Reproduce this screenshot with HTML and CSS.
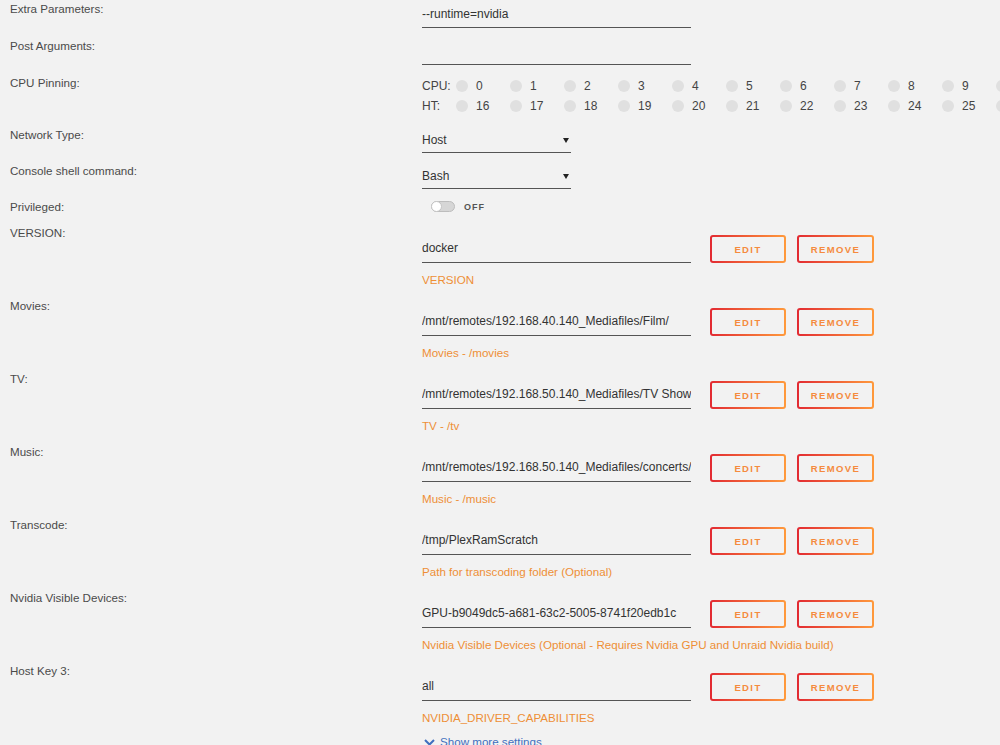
FILE: index.html
```html
<!DOCTYPE html>
<html>
<head>
<meta charset="utf-8">
<link rel="stylesheet" href="styles.css">
</head>
<body>
<div class="form">
  <div class="row row-text">
    <div class="label">Extra Parameters:</div>
    <div class="field"><div class="input">--runtime=nvidia</div></div>
  </div>
  <div class="row row-text">
    <div class="label">Post Arguments:</div>
    <div class="field"><div class="input"></div></div>
  </div>
  <div class="row row-cpu">
    <div class="label">CPU Pinning:</div>
    <div class="field">
      <div class="cpu-line">
        <span class="cpu-tag">CPU:</span>
        <span class="cell"><i></i>0</span><span class="cell"><i></i>1</span><span class="cell"><i></i>2</span><span class="cell"><i></i>3</span><span class="cell"><i></i>4</span><span class="cell"><i></i>5</span><span class="cell"><i></i>6</span><span class="cell"><i></i>7</span><span class="cell"><i></i>8</span><span class="cell"><i></i>9</span><span class="cell"><i></i></span>
      </div>
      <div class="cpu-line">
        <span class="cpu-tag">HT:</span>
        <span class="cell"><i></i>16</span><span class="cell"><i></i>17</span><span class="cell"><i></i>18</span><span class="cell"><i></i>19</span><span class="cell"><i></i>20</span><span class="cell"><i></i>21</span><span class="cell"><i></i>22</span><span class="cell"><i></i>23</span><span class="cell"><i></i>24</span><span class="cell"><i></i>25</span><span class="cell"><i></i></span>
      </div>
    </div>
  </div>
  <div class="row row-select">
    <div class="label">Network Type:</div>
    <div class="field"><div class="select"><span>Host</span><svg class="caret" width="6" height="5" viewBox="0 0 6 5"><path d="M0 0H6L3 5Z" fill="#222"/></svg></div></div>
  </div>
  <div class="row row-select">
    <div class="label">Console shell command:</div>
    <div class="field"><div class="select"><span>Bash</span><svg class="caret" width="6" height="5" viewBox="0 0 6 5"><path d="M0 0H6L3 5Z" fill="#222"/></svg></div></div>
  </div>
  <div class="row row-switch">
    <div class="label">Privileged:</div>
    <div class="field switch-field"><span class="switch"><span class="knob"></span></span><span class="off">OFF</span></div>
  </div>

  <div class="row row-config">
    <div class="label">VERSION:</div>
    <div class="field">
      <div class="config-line"><div class="input cfg">docker</div><div class="btn edit">EDIT</div><div class="btn remove">REMOVE</div></div>
      <div class="desc">VERSION</div>
    </div>
  </div>
  <div class="row row-config">
    <div class="label">Movies:</div>
    <div class="field">
      <div class="config-line"><div class="input cfg">/mnt/remotes/192.168.40.140_Mediafiles/Film/</div><div class="btn edit">EDIT</div><div class="btn remove">REMOVE</div></div>
      <div class="desc">Movies - /movies</div>
    </div>
  </div>
  <div class="row row-config">
    <div class="label">TV:</div>
    <div class="field">
      <div class="config-line"><div class="input cfg">/mnt/remotes/192.168.50.140_Mediafiles/TV Shows/</div><div class="btn edit">EDIT</div><div class="btn remove">REMOVE</div></div>
      <div class="desc">TV - /tv</div>
    </div>
  </div>
  <div class="row row-config">
    <div class="label">Music:</div>
    <div class="field">
      <div class="config-line"><div class="input cfg">/mnt/remotes/192.168.50.140_Mediafiles/concerts/</div><div class="btn edit">EDIT</div><div class="btn remove">REMOVE</div></div>
      <div class="desc">Music - /music</div>
    </div>
  </div>
  <div class="row row-config">
    <div class="label">Transcode:</div>
    <div class="field">
      <div class="config-line"><div class="input cfg">/tmp/PlexRamScratch</div><div class="btn edit">EDIT</div><div class="btn remove">REMOVE</div></div>
      <div class="desc">Path for transcoding folder (Optional)</div>
    </div>
  </div>
  <div class="row row-config">
    <div class="label">Nvidia Visible Devices:</div>
    <div class="field">
      <div class="config-line"><div class="input cfg">GPU-b9049dc5-a681-63c2-5005-8741f20edb1c</div><div class="btn edit">EDIT</div><div class="btn remove">REMOVE</div></div>
      <div class="desc">Nvidia Visible Devices (Optional - Requires Nvidia GPU and Unraid Nvidia build)</div>
    </div>
  </div>
  <div class="row row-config">
    <div class="label">Host Key 3:</div>
    <div class="field">
      <div class="config-line"><div class="input cfg">all</div><div class="btn edit">EDIT</div><div class="btn remove">REMOVE</div></div>
      <div class="desc">NVIDIA_DRIVER_CAPABILITIES</div>
    </div>
  </div>
  <div class="more"><svg width="11" height="7" viewBox="0 0 11 7"><path d="M1 1L5.5 5.5L10 1" fill="none" stroke="#3f6fbf" stroke-width="2"/></svg><span>Show more settings</span></div>
</div>
</body>
</html>
```
FILE: styles.css
```css
html, body {
  margin: 0;
  padding: 0;
  overflow: hidden;
  background: #f2f2f2;
}
body {
  font-family: "Liberation Sans", Arial, sans-serif;
  font-size: 12px;
  color: #4a4a4a;
}
.form {
  width: 1000px;
}
.row {
  display: flex;
  align-items: flex-start;
}
.label {
  flex: none;
  width: 422px;
  box-sizing: border-box;
  padding-left: 10px;
  line-height: 18px;
  font-size: 11.6px;
}
.field {
  flex: none;
  white-space: nowrap;
}
.input {
  width: 269px;
  height: 18px;
  line-height: 18px;
  padding-bottom: 4px;
  border-bottom: 1px solid #555;
  white-space: nowrap;
  overflow: hidden;
  color: #333;
}
.row-text { height: 37px; }
.row-text .field { padding-top: 5px; }

.row-cpu { height: 52px; }
.row-cpu .field { padding-top: 2px; }
.cpu-line {
  display: flex;
  align-items: center;
  height: 20px;
  color: #444;
}
.cpu-tag {
  width: 34px;
  flex: none;
}
.cell {
  flex: none;
  width: 54px;
  display: flex;
  align-items: center;
}
.cell i {
  width: 12px;
  height: 12px;
  border-radius: 50%;
  background: #e0e0e0;
  margin-right: 8px;
}

.row-select { height: 36px; }
.row-select .field { padding-top: 5px; }
.select {
  width: 149px;
  height: 18px;
  line-height: 18px;
  padding-bottom: 3px;
  border-bottom: 1px solid #555;
  display: flex;
  justify-content: space-between;
  align-items: center;
  color: #333;
}
.caret { margin-right: 2px; }

.row-switch { height: 26px; }
.switch-field {
  padding-top: 3px;
  display: flex;
  align-items: center;
}
.switch {
  margin-left: 9px;
  width: 24px;
  height: 11px;
  box-sizing: border-box;
  border: 1px solid #bdbdbd;
  border-radius: 6px;
  background: #d6d6d6;
  position: relative;
  display: block;
}
.knob {
  position: absolute;
  left: -1px;
  top: -1px;
  width: 11px;
  height: 11px;
  box-sizing: border-box;
  border-radius: 50%;
  background: #fff;
  border: 1px solid #c4c4c4;
}
.off {
  margin-left: 9px;
  font-size: 9px;
  font-weight: bold;
  letter-spacing: 1px;
  color: #555;
}

.row-config { height: 73px; }
.row-config .field { padding-top: 11px; }
.config-line {
  display: flex;
  align-items: flex-start;
}
.input.cfg {
  margin-top: 4px;
  padding-bottom: 5px;
}
.btn {
  box-sizing: border-box;
  height: 28px;
  border: 2px solid transparent;
  border-radius: 3px;
  background: linear-gradient(#f2f2f2, #f2f2f2) padding-box,
              linear-gradient(90deg, #e22a32, #ff9a3c) border-box;
  display: flex;
  align-items: center;
  justify-content: center;
  font-size: 9.5px;
  font-weight: bold;
  letter-spacing: 1.4px;
  color: #f58b3e;
}
.edit {
  width: 76px;
  margin-left: 19px;
}
.remove {
  width: 77px;
  margin-left: 11px;
}
.desc {
  margin-top: 8px;
  line-height: 18px;
  font-size: 11.6px;
  color: #ee8f36;
}
.more {
  display: flex;
  align-items: center;
  padding-left: 424px;
  line-height: 14px;
  font-size: 11.6px;
  color: #3f6fbf;
}
.more svg { margin-right: 5px; }
```
